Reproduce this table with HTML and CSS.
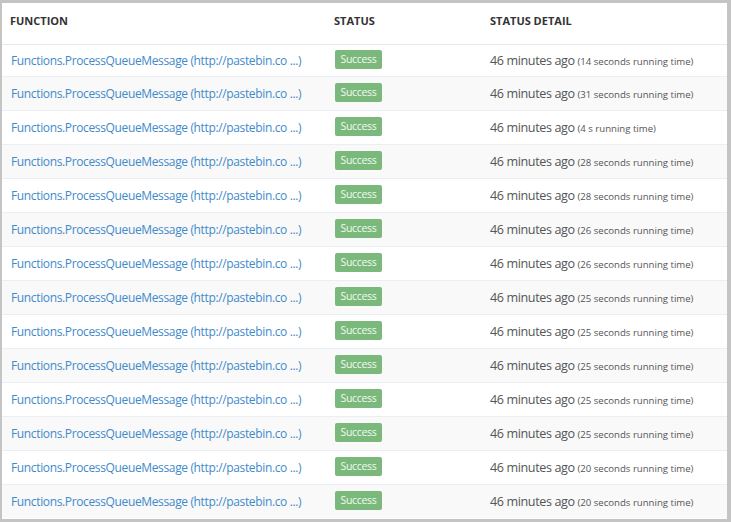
FILE: index.html
```html
<!DOCTYPE html>
<html>
<head>
<meta charset="utf-8">
<link rel="stylesheet" href="styles.css">
</head>
<body>
<div class="panel">
  <div class="head">
    <div>FUNCTION</div>
    <div>STATUS</div>
    <div>STATUS DETAIL</div>
  </div>
  <div class="rows">
    <div class="row first"><a class="fn">Functions.ProcessQueueMessage (http://pastebin.co ...)</a><div><span class="badge">Success</span></div><div class="detail">46 minutes ago <small>(14 seconds running time)</small></div></div>
    <div class="row alt"><a class="fn">Functions.ProcessQueueMessage (http://pastebin.co ...)</a><div><span class="badge">Success</span></div><div class="detail">46 minutes ago <small>(31 seconds running time)</small></div></div>
    <div class="row"><a class="fn">Functions.ProcessQueueMessage (http://pastebin.co ...)</a><div><span class="badge">Success</span></div><div class="detail">46 minutes ago <small>(4 s running time)</small></div></div>
    <div class="row alt"><a class="fn">Functions.ProcessQueueMessage (http://pastebin.co ...)</a><div><span class="badge">Success</span></div><div class="detail">46 minutes ago <small>(28 seconds running time)</small></div></div>
    <div class="row"><a class="fn">Functions.ProcessQueueMessage (http://pastebin.co ...)</a><div><span class="badge">Success</span></div><div class="detail">46 minutes ago <small>(28 seconds running time)</small></div></div>
    <div class="row alt"><a class="fn">Functions.ProcessQueueMessage (http://pastebin.co ...)</a><div><span class="badge">Success</span></div><div class="detail">46 minutes ago <small>(26 seconds running time)</small></div></div>
    <div class="row"><a class="fn">Functions.ProcessQueueMessage (http://pastebin.co ...)</a><div><span class="badge">Success</span></div><div class="detail">46 minutes ago <small>(26 seconds running time)</small></div></div>
    <div class="row alt"><a class="fn">Functions.ProcessQueueMessage (http://pastebin.co ...)</a><div><span class="badge">Success</span></div><div class="detail">46 minutes ago <small>(25 seconds running time)</small></div></div>
    <div class="row"><a class="fn">Functions.ProcessQueueMessage (http://pastebin.co ...)</a><div><span class="badge">Success</span></div><div class="detail">46 minutes ago <small>(25 seconds running time)</small></div></div>
    <div class="row alt"><a class="fn">Functions.ProcessQueueMessage (http://pastebin.co ...)</a><div><span class="badge">Success</span></div><div class="detail">46 minutes ago <small>(25 seconds running time)</small></div></div>
    <div class="row"><a class="fn">Functions.ProcessQueueMessage (http://pastebin.co ...)</a><div><span class="badge">Success</span></div><div class="detail">46 minutes ago <small>(25 seconds running time)</small></div></div>
    <div class="row alt"><a class="fn">Functions.ProcessQueueMessage (http://pastebin.co ...)</a><div><span class="badge">Success</span></div><div class="detail">46 minutes ago <small>(25 seconds running time)</small></div></div>
    <div class="row"><a class="fn">Functions.ProcessQueueMessage (http://pastebin.co ...)</a><div><span class="badge">Success</span></div><div class="detail">46 minutes ago <small>(20 seconds running time)</small></div></div>
    <div class="row alt"><a class="fn">Functions.ProcessQueueMessage (http://pastebin.co ...)</a><div><span class="badge">Success</span></div><div class="detail">46 minutes ago <small>(20 seconds running time)</small></div></div>
  </div>
</div>
</body>
</html>
```

FILE: styles.css
```css
html, body {
  margin: 0;
  padding: 0;
  background: #c4c4c4;
  height: 100%;
}
body {
  padding: 3px 4px 3px 2px;
  box-sizing: border-box;
  font-family: "Open Sans", "Noto Sans", sans-serif;
  color: #555;
}
.panel {
  background: #fff;
  height: 516px;
  overflow: hidden;
}
.head, .row {
  display: grid;
  grid-template-columns: 324px 156px 1fr;
  padding-left: 8px;
}
.head {
  height: 41px;
  box-sizing: border-box;
  padding-top: 10px;
  font-size: 11px;
  font-weight: 700;
  color: #333;
}
.row {
  height: 34px;
  box-sizing: border-box;
  border-top: 1px solid #ebeef2;
  align-items: center;
}
.row.first {
  height: 32px;
  border-top-color: #e3eaf1;
}
.row.alt {
  background: #f9f9f9;
}
.fn {
  color: #3f8acb;
  font-size: 12px;
  letter-spacing: -0.36px;
  padding-left: 1px;
  white-space: nowrap;
}
.badge {
  display: inline-block;
  vertical-align: top;
  background: #7ab97b;
  color: #f2f9f2;
  font-size: 10.5px;
  letter-spacing: -0.3px;
  line-height: 19px;
  height: 19px;
  width: 47px;
  text-align: center;
  border-radius: 2px;
  margin-left: 1px;
}
.detail {
  font-size: 12.6px;
  letter-spacing: -0.4px;
  color: #555;
  white-space: nowrap;
}
.detail small {
  font-size: 9.6px;
  letter-spacing: 0;
}
```
